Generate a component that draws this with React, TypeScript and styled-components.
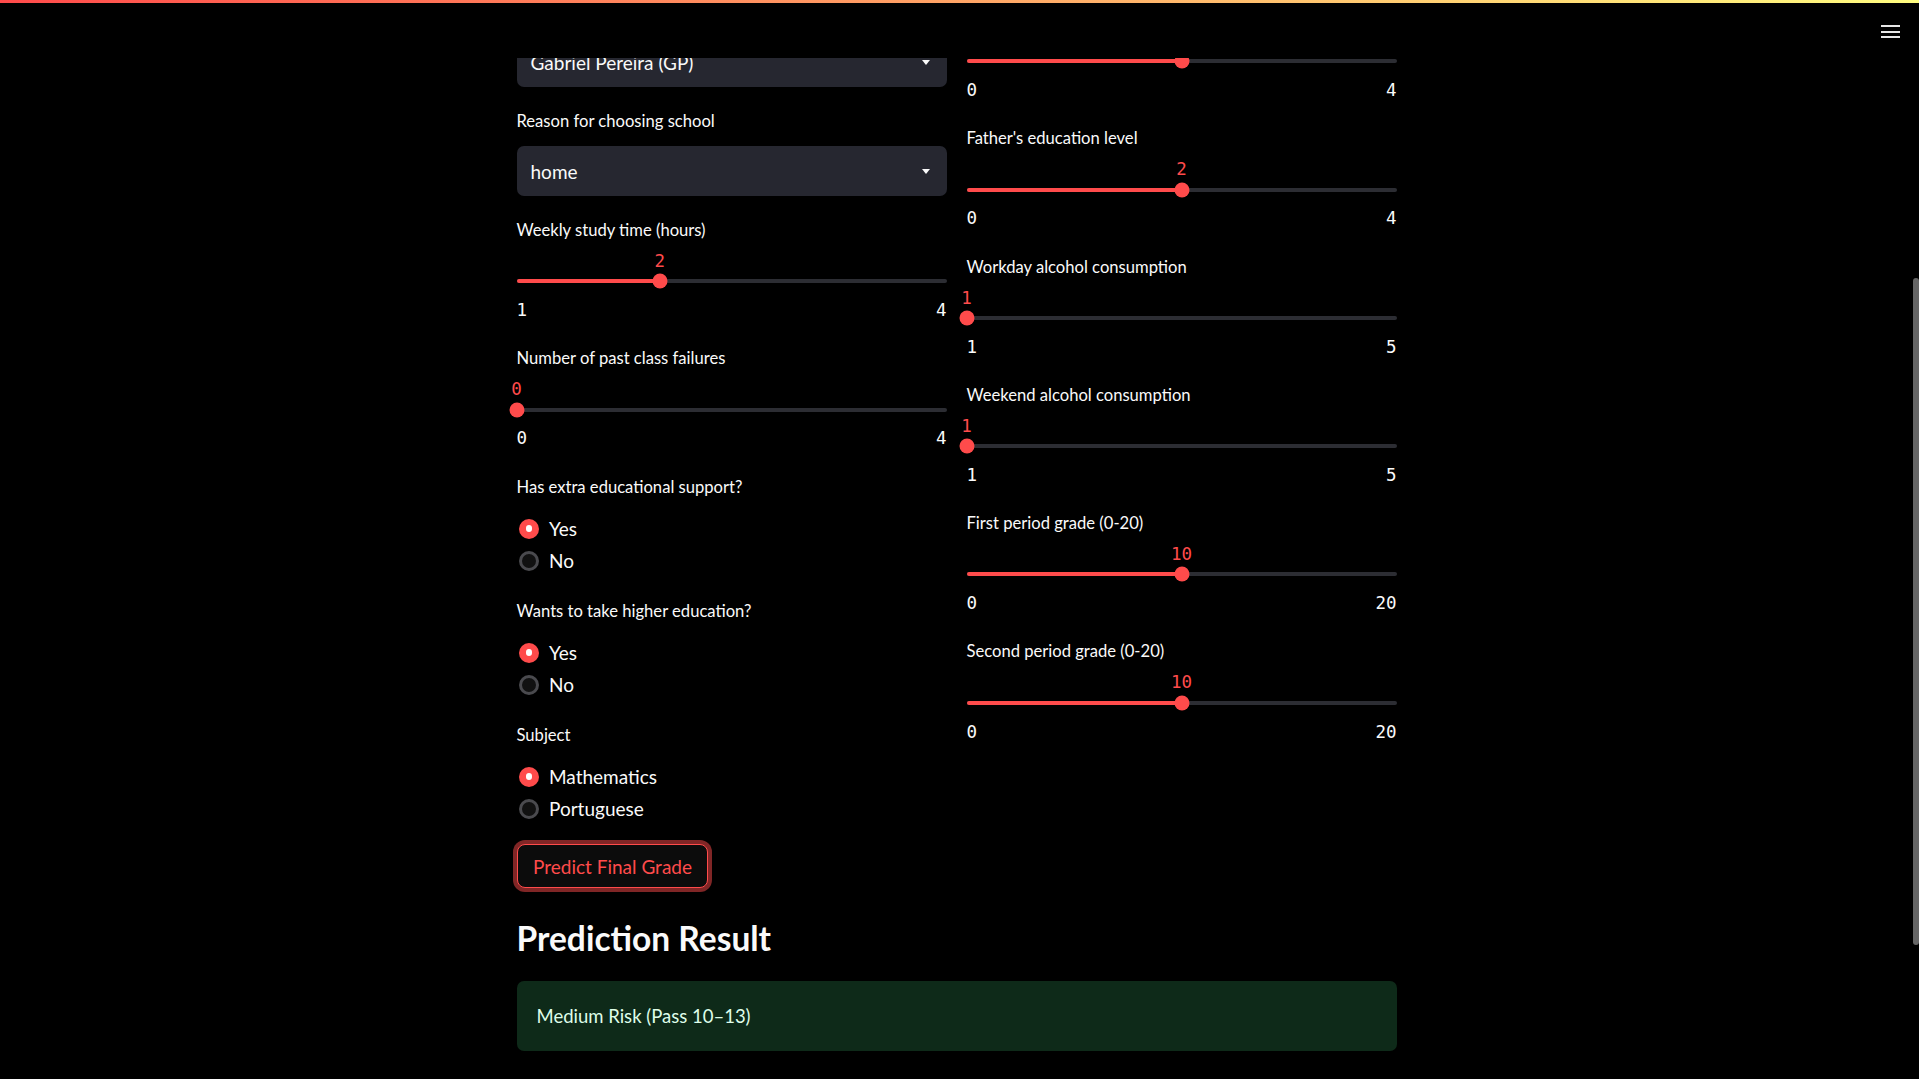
import React, { useLayoutEffect, useRef, useState } from "react";
import styled, { createGlobalStyle } from "styled-components";

const GlobalStyle = createGlobalStyle`
  html, body {
    margin: 0;
    padding: 0;
    height: 100%;
    overflow: hidden;
    background: #000;
  }
  #root { height: 100%; }
  *, *::before, *::after { box-sizing: border-box; }
`;

const Shell = styled.div`
  display: flex;
  height: 100vh;
  background: #000;
`;

const AppView = styled.div`
  flex: 1;
  min-width: 0;
  height: 100%;
  overflow-y: auto;
  overflow-x: hidden;
  scrollbar-width: none;
  background: #000;
  color: #fafafa;
  font-family: Lato, "Noto Sans", sans-serif;

  &::-webkit-scrollbar {
    display: none;
  }
`;

const ScrollTrack = styled.div`
  flex: none;
  width: 6px;
  height: 100%;
  background: #000;
`;

const ScrollThumb = styled.div`
  width: 6px;
  border-radius: 3px;
  background: #666;
`;

const Header = styled.header`
  position: fixed;
  top: 0;
  left: 0;
  right: 0;
  height: 58px;
  background: #000;
  z-index: 10;
  display: flex;
  flex-direction: column;
`;

const Decoration = styled.div`
  height: 3px;
  background: linear-gradient(90deg, #ff4b4b, #fffd80);
`;

const Toolbar = styled.div`
  flex: 1;
  display: flex;
  justify-content: flex-end;
  align-items: flex-start;
  padding: 21px 19px 0 0;
`;

const MenuButton = styled.span`
  display: block;
  width: 19px;
  height: 14px;
  line-height: 0;
`;

const Main = styled.main`
  width: 880px;
  margin: 0 auto;
  padding: 120px 0 245px;
  display: flex;
  flex-direction: column;
`;

const Title = styled.h1`
  margin: 0;
  padding: 15px 0 20px;
  font-size: 52px;
  font-weight: 700;
  line-height: 66px;
  color: #fafafa;
`;

const Caption = styled.p`
  margin: 20px 0 0;
  font-size: 19px;
  line-height: 32px;
  color: #fafafa;
`;

const Divider = styled.hr`
  margin: 50px 0 50px;
  border: none;
  border-top: 1px solid rgba(250, 250, 250, 0.2);
`;

const SectionHeading = styled.h3`
  margin: 0;
  padding: 11px 0 3px;
  font-size: 33.5px;
  font-weight: 700;
  line-height: 37px;
  color: #fafafa;
`;

const Columns = styled.div`
  display: grid;
  grid-template-columns: 1fr 1fr;
  column-gap: 20px;
  align-items: start;
  margin-top: 20px;
`;

const Column = styled.div<{ $offset?: number }>`
  display: flex;
  flex-direction: column;
  gap: 20px;
  padding-top: ${(p) => p.$offset ?? 0}px;
`;

const Field = styled.div`
  display: flex;
  flex-direction: column;
`;

const FieldLabel = styled.div`
  height: 28px;
  font-size: 16.6px;
  line-height: 28px;
  color: #fafafa;
  white-space: nowrap;
`;

const SelectBox = styled.div`
  margin-top: 11px;
  height: 50px;
  background: #262730;
  border-radius: 7px;
  display: flex;
  align-items: center;
  justify-content: space-between;
  padding: 0 16.5px 0 14px;
  font-size: 19px;
  color: #fafafa;
`;

const Caret = styled.svg`
  display: block;
  flex: none;
`;

const SliderField = styled(Field)`
  padding-bottom: 3.2px;
`;

const ValueRow = styled.div`
  position: relative;
  height: 21px;
  margin-top: 7px;
`;

const ThumbValue = styled.span`
  position: absolute;
  top: 0;
  transform: translateX(-50%);
  font-family: "DejaVu Sans Mono", "Liberation Mono", monospace;
  font-size: 17.5px;
  line-height: 21px;
  color: #ff4b4b;
`;

const Rail = styled.div`
  position: relative;
  height: 4px;
  margin-top: 7.3px;
  border-radius: 2px;
  background: #2c2d33;
`;

const RailFill = styled.div`
  height: 100%;
  border-radius: 2px;
  background: #ff4b4b;
`;

const Thumb = styled.div`
  position: absolute;
  top: 50%;
  width: 15px;
  height: 15px;
  border-radius: 50%;
  background: #ff4b4b;
  transform: translate(-50%, -50%);
`;

const Ticks = styled.div`
  display: flex;
  justify-content: space-between;
  margin-top: 16.8px;
  font-family: "DejaVu Sans Mono", "Liberation Mono", monospace;
  font-size: 17.5px;
  line-height: 21px;
  color: #fafafa;
`;

const Options = styled.div`
  display: flex;
  flex-direction: column;
  margin-top: 12px;
`;

const Option = styled.div`
  display: flex;
  align-items: center;
  gap: 10px;
  height: 32px;
  padding-left: 2.5px;
  font-size: 19px;
  color: #fafafa;
`;

const RadioMark = styled.span<{ $checked: boolean }>`
  flex: none;
  width: 20px;
  height: 20px;
  border-radius: 50%;
  display: flex;
  align-items: center;
  justify-content: center;
  background: ${(p) => (p.$checked ? "#ff4b4b" : "#111")};
  border: ${(p) => (p.$checked ? "none" : "3px solid #4a4a4e")};

  &::after {
    content: "";
    display: ${(p) => (p.$checked ? "block" : "none")};
    width: 6.5px;
    height: 6.5px;
    border-radius: 50%;
    background: #fff;
  }
`;

const PrimaryAction = styled.button`
  align-self: flex-start;
  margin: 19.5px 0 0 0.5px;
  height: 44px;
  padding: 0 15px;
  border: 1px solid #ff4b4b;
  border-radius: 8px;
  background: #0c0c0c;
  color: #ff4b4b;
  font-family: Lato, "Noto Sans", sans-serif;
  font-size: 19px;
  line-height: 1;
  box-shadow: 0 0 0 4px rgba(255, 75, 75, 0.5);
  cursor: pointer;
`;

const ResultHeading = styled.h3`
  margin: 32px 0 0;
  font-size: 33.5px;
  font-weight: 700;
  line-height: 37px;
  color: #fafafa;
`;

const SuccessAlert = styled.div`
  margin-top: 23.5px;
  padding: 19px 20px;
  border-radius: 7px;
  background: #0e2a19;
  color: #dffde9;
  font-size: 18.5px;
  line-height: 32px;
`;

function SelectField({ label, value }: { label: string; value: string }) {
  return (
    <Field>
      <FieldLabel>{label}</FieldLabel>
      <SelectBox>
        <span>{value}</span>
        <Caret width="8" height="5" viewBox="0 0 8 5">
          <polygon points="0,0 8,0 4,5" fill="#fafafa" />
        </Caret>
      </SelectBox>
    </Field>
  );
}

function SliderInput({
  label,
  min,
  max,
  value,
}: {
  label: string;
  min: number;
  max: number;
  value: number;
}) {
  const pct = ((value - min) / (max - min)) * 100;
  return (
    <SliderField>
      <FieldLabel>{label}</FieldLabel>
      <ValueRow>
        <ThumbValue style={{ left: `${pct}%` }}>{value}</ThumbValue>
      </ValueRow>
      <Rail>
        <RailFill style={{ width: `${pct}%` }} />
        <Thumb style={{ left: `${pct}%` }} />
      </Rail>
      <Ticks>
        <span>{min}</span>
        <span>{max}</span>
      </Ticks>
    </SliderField>
  );
}

function RadioGroup({
  label,
  options,
  selected,
}: {
  label: string;
  options: string[];
  selected: string;
}) {
  return (
    <Field>
      <FieldLabel>{label}</FieldLabel>
      <Options>
        {options.map((o) => (
          <Option key={o}>
            <RadioMark $checked={o === selected} />
            <span>{o}</span>
          </Option>
        ))}
      </Options>
    </Field>
  );
}

export default function App() {
  const viewRef = useRef<HTMLDivElement>(null);
  const colsRef = useRef<HTMLDivElement>(null);
  const [thumb, setThumb] = useState({ top: 278, height: 667 });

  const syncThumb = () => {
    const view = viewRef.current;
    if (!view) return;
    const h = view.clientHeight;
    const total = view.scrollHeight;
    if (total <= h) return;
    setThumb({
      top: (view.scrollTop / total) * h,
      height: (h / total) * h,
    });
  };

  useLayoutEffect(() => {
    const apply = () => {
      const view = viewRef.current;
      const cols = colsRef.current;
      if (!view || !cols) return;
      const top =
        cols.getBoundingClientRect().top -
        view.getBoundingClientRect().top +
        view.scrollTop;
      view.scrollTop = top + 4;
      syncThumb();
    };
    apply();
    const fonts = (document as any).fonts;
    if (fonts && fonts.ready) fonts.ready.then(apply);
  }, []);

  return (
    <>
      <GlobalStyle />
      <Header>
        <Decoration />
        <Toolbar>
          <MenuButton>
            <svg width="19" height="14" viewBox="0 0 19 14">
              <rect x="0" y="1" width="19" height="2" fill="#e6e6e6" />
              <rect x="0" y="7" width="19" height="2" fill="#e6e6e6" />
              <rect x="0" y="12" width="19" height="2" fill="#e6e6e6" />
            </svg>
          </MenuButton>
        </Toolbar>
      </Header>
      <Shell>
        <AppView ref={viewRef} onScroll={syncThumb}>
          <Main>
            <Title>Student Grade Predictor</Title>
            <Caption>
              Fill in the student details below and predict the final grade (G3).
            </Caption>
            <Divider />
            <SectionHeading>Student Information</SectionHeading>
            <Columns ref={colsRef}>
              <Column $offset={2}>
                <SelectField label="School" value="Gabriel Pereira (GP)" />
                <SelectField label="Reason for choosing school" value="home" />
                <SliderInput label="Weekly study time (hours)" min={1} max={4} value={2} />
                <SliderInput label="Number of past class failures" min={0} max={4} value={0} />
                <RadioGroup
                  label="Has extra educational support?"
                  options={["Yes", "No"]}
                  selected="Yes"
                />
                <RadioGroup
                  label="Wants to take higher education?"
                  options={["Yes", "No"]}
                  selected="Yes"
                />
                <RadioGroup
                  label="Subject"
                  options={["Mathematics", "Portuguese"]}
                  selected="Mathematics"
                />
              </Column>
              <Column>
                <SliderInput label="Mother's education level" min={0} max={4} value={2} />
                <SliderInput label="Father's education level" min={0} max={4} value={2} />
                <SliderInput label="Workday alcohol consumption" min={1} max={5} value={1} />
                <SliderInput label="Weekend alcohol consumption" min={1} max={5} value={1} />
                <SliderInput label="First period grade (0-20)" min={0} max={20} value={10} />
                <SliderInput label="Second period grade (0-20)" min={0} max={20} value={10} />
              </Column>
            </Columns>
            <PrimaryAction type="button">Predict Final Grade</PrimaryAction>
            <ResultHeading>Prediction Result</ResultHeading>
            <SuccessAlert>Medium Risk (Pass 10–13)</SuccessAlert>
          </Main>
        </AppView>
        <ScrollTrack>
          <ScrollThumb style={{ marginTop: thumb.top, height: thumb.height }} />
        </ScrollTrack>
      </Shell>
    </>
  );
}
